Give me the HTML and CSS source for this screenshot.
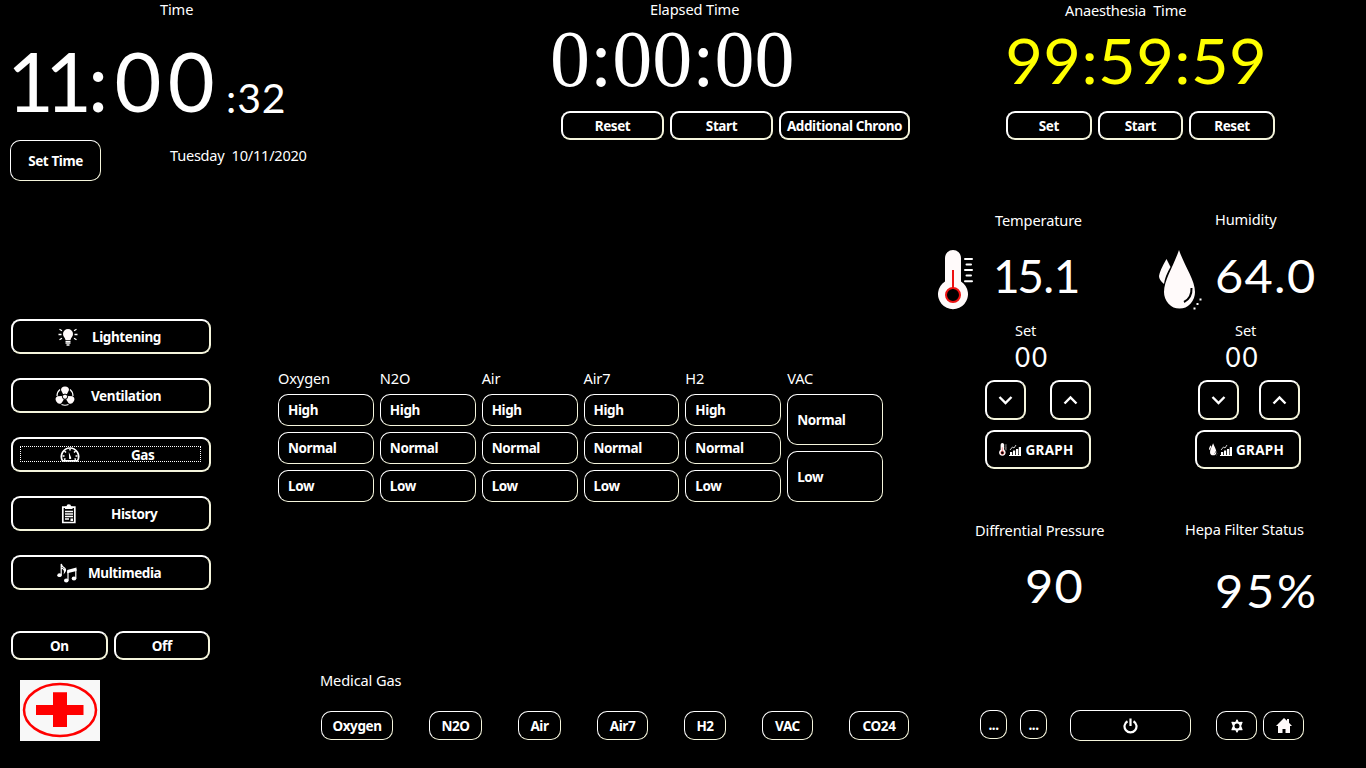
FILE: index.html
```
<!DOCTYPE html>
<html lang="en">
<head>
<meta charset="utf-8">
<title>Operating Room Control Panel</title>
<link rel="stylesheet" href="styles.css">
</head>
<body>
<svg class="defs" width="0" height="0">
  <symbol id="thermo" viewBox="0 0 36 60">
    <path d="M7 8a8 8 0 0 1 16 0v23.5a15 15 0 1 1-16 0z" fill="#fffafa"/>
    <path d="M15 20v20" stroke="#e11" stroke-width="2"/>
    <circle cx="15" cy="45" r="7" fill="#000" stroke="#e11" stroke-width="2"/>
    <path d="M27 9h7M28.500 14.500h4.500M27 20h7M28.500 25.500h4.500M27 31.200h7" stroke="#fff" stroke-width="2" stroke-linecap="round"/>
  </symbol>
  <symbol id="drops" viewBox="0 0 44 60">
    <path d="M7.500 9L11.500 17Q6 26 5 34 0 30 0 26 1 20 7.500 9z" fill="#fffafa"/>
    <path d="M20 0C25 15 36 30 36 42a15.500 16.500 0 0 1-31 0C5 30 15 15 20 0z" fill="#fffafa"/>
    <path d="M32.500 38Q33 48 25 52" fill="none" stroke="#000" stroke-width="2"/>
    <path d="M34.500 58.500h2M37.500 54h2M40.500 49.500h2" stroke="#fff" stroke-width="2"/>
  </symbol>
  <symbol id="bars" viewBox="0 0 12 12">
    <path d="M0 11.500h12" stroke="#fff"/>
    <path d="M1 8h2.200v3H1zM4 6.500h2.200V11H4zM7 5h2.200v6H7zM9.800 3H12v8H9.800z" fill="#fff"/>
    <path d="M1 6l2.500-3 1.500 1L7 1" fill="none" stroke="#fff" stroke-width=".8"/>
  </symbol>
  <symbol id="down" viewBox="0 0 16 10"><path d="M1.500 2l6 6 6-6" fill="none" stroke="#fff" stroke-width="2.400"/></symbol>
  <symbol id="up" viewBox="0 0 16 10"><path d="M1.500 8.500l6-6 6 6" fill="none" stroke="#fff" stroke-width="2.400"/></symbol>
</svg>

<header class="top">
  <section class="clock">
    <div class="label clock-label">Time</div>
    <div class="clock-time"><span class="ones">1</span><span class="ones last">1</span><span>:</span><span>00</span><span class="seconds">:32</span></div>
    <div class="clock-foot"><button class="btn thin set-time">Set Time</button><span class="label date">Tuesday &nbsp;10/11/2020</span></div>
  </section>
  <section class="elapsed">
    <div class="label elapsed-label">Elapsed Time</div>
    <div class="elapsed-time">0:00:00</div>
    <div class="buttons"><button class="btn">Reset</button><button class="btn">Start</button><button class="btn wide">Additional Chrono</button></div>
  </section>
  <section class="anaes">
    <div class="label anaes-label">Anaesthesia &nbsp;Time</div>
    <div class="anaes-time">99:59:59</div>
    <div class="buttons"><button class="btn">Set</button><button class="btn">Start</button><button class="btn">Reset</button></div>
  </section>
</header>

<main class="panel">
  <aside class="side">
    <nav class="nav">
      <button class="btn light"><svg width="20" height="18" viewBox="0 0 20 18"><path d="M10 1a5 5 0 0 1 5 5c0 2.500-2 3.500-2.500 6h-5C7 9.500 5 8.500 5 6a5 5 0 0 1 5-5z" fill="#fffafa"/><path d="M7.500 13.500h5M7.500 15.200h5M8.500 17h3M.5 6.500h3M16.500 6.500h3M1.500 1.200l2.500 1.500M18.500 1.200L16 2.700M1.500 11.800L4 10.300M18.500 11.800L16 10.300" stroke="#fff" stroke-width="1.300"/></svg><span>Lightening</span></button>
      <button class="btn vent"><svg width="20" height="20" viewBox="0 0 20 20"><g fill="#fffafa"><path d="M8 8L6 4Q6 .5 10 .5T14 4L12 8z"/><path d="M8 8L6 4Q6 .5 10 .5T14 4L12 8z" transform="rotate(120 10 10.500)"/><path d="M8 8L6 4Q6 .5 10 .5T14 4L12 8z" transform="rotate(240 10 10.500)"/></g><circle cx="10" cy="10.700" r="2.600" fill="#fffafa" stroke="#000"/><path d="M5 3.500Q2 6 2 10M15 3.500Q18 6 18 10M6.500 18.500Q10 20 13.500 18.500" fill="none" stroke="#fff" stroke-width="1.200"/></svg><span>Ventilation</span></button>
      <button class="btn gas"><span class="focus"><svg width="20" height="16" viewBox="0 0 20 16"><path d="M2.500 14.800A8.600 8.600 0 1 1 17.500 14.800z" fill="none" stroke="#fff" stroke-width="1.700"/><path d="M10 2.500v2M4.500 5l1.500 1.500M15.500 5L14 6.500M2.500 10h2M15.500 10h2M4 13.500l1.500-.8M16 13.500l-1.500-.8" stroke="#fff" stroke-width="1.500"/><path d="M8.800 6l2.300 5.500a1.100 1.100 0 1 1-2 0z" fill="#fff"/></svg><span class="gas-text">Gas</span></span></button>
      <button class="btn hist"><svg width="16" height="20" viewBox="0 0 16 20"><path d="M1.800 3.200h12v15.300h-12z" fill="none" stroke="#fff" stroke-width="1.700"/><path d="M4 5V2.500H5.500a2.300 2.300 0 0 1 4.600 0h1.500V5z" fill="#fff"/><path d="M4 7.500h8M4 10h8M4 12.500h8M4 15h4" stroke="#fff" stroke-width="1.400"/><path d="M9.500 14.500H12V17H9.500z" fill="#fff"/></svg><span>History</span></button>
      <button class="btn media"><svg width="20" height="20" viewBox="0 0 20 20"><g fill="#fff"><ellipse cx="2.500" cy="12.200" rx="2.200" ry="1.900"/><ellipse cx="9.300" cy="17.500" rx="2.300" ry="2"/><ellipse cx="17" cy="15.500" rx="2.300" ry="2"/><path d="M10.200 7L19.500 4.500V8L10.200 10.300z"/></g><path d="M4.200 12V1Q5 4 7.500 5 9.500 7 7.500 9.500 8 6 4.200 5M11 17.500V8M18.800 15.500V6" fill="none" stroke="#fff" stroke-width="1.200"/></svg><span>Multimedia</span></button>
    </nav>
    <div class="power-row"><button class="btn">On</button><button class="btn">Off</button></div>
    <svg class="logo" width="80" height="61" viewBox="0 0 80 61"><rect width="80" height="61" fill="#f8f8f8"/><ellipse cx="40" cy="30" rx="36" ry="26" fill="none" stroke="#f00" stroke-width="2.500"/><path d="M33 12.300h14V25h16.500v10H47v12H33V35H16V25h17z" fill="#f00"/></svg>
  </aside>

  <section class="center">
    <div class="matrix">
      <div class="gas-col"><div class="label">Oxygen</div><button class="btn thin">High</button><button class="btn thin">Normal</button><button class="btn thin">Low</button></div>
      <div class="gas-col"><div class="label">N2O</div><button class="btn thin">High</button><button class="btn thin">Normal</button><button class="btn thin">Low</button></div>
      <div class="gas-col"><div class="label">Air</div><button class="btn thin">High</button><button class="btn thin">Normal</button><button class="btn thin">Low</button></div>
      <div class="gas-col"><div class="label">Air7</div><button class="btn thin">High</button><button class="btn thin">Normal</button><button class="btn thin">Low</button></div>
      <div class="gas-col"><div class="label">H2</div><button class="btn thin">High</button><button class="btn thin">Normal</button><button class="btn thin">Low</button></div>
      <div class="gas-col"><div class="label">VAC</div><button class="btn thin">Normal</button><button class="btn thin">Low</button></div>
    </div>
    <div class="label med-label">Medical Gas</div>
    <div class="med-row"><button class="btn thin">Oxygen</button><button class="btn thin">N2O</button><button class="btn thin">Air</button><button class="btn thin">Air7</button><button class="btn thin">H2</button><button class="btn thin">VAC</button><button class="btn thin">CO24</button></div>
  </section>

  <section class="right">
    <div class="sensors">
      <div class="sensor temp">
        <div class="label name">Temperature</div>
        <div class="reading"><svg width="36" height="60"><use href="#thermo"/></svg><span class="value"><span class="one">1</span>5.1</span></div>
        <div class="label set">Set</div>
        <div class="target">00</div>
        <div class="arrows"><button class="btn"><svg width="16" height="10"><use href="#down"/></svg></button><button class="btn"><svg width="16" height="10"><use href="#up"/></svg></button></div>
        <button class="btn graph"><svg width="8" height="13"><use href="#thermo"/></svg><svg width="12" height="12"><use href="#bars"/></svg><span>GRAPH</span></button>
        <div class="label status">Diffrential Pressure</div>
        <div class="value status-value">90</div>
      </div>
      <div class="sensor hum">
        <div class="label name">Humidity</div>
        <div class="reading"><svg width="44" height="60"><use href="#drops"/></svg><span class="value">64.0</span></div>
        <div class="label set">Set</div>
        <div class="target">00</div>
        <div class="arrows"><button class="btn"><svg width="16" height="10"><use href="#down"/></svg></button><button class="btn"><svg width="16" height="10"><use href="#up"/></svg></button></div>
        <button class="btn graph"><svg width="9" height="13"><use href="#drops"/></svg><svg width="12" height="12"><use href="#bars"/></svg><span>GRAPH</span></button>
        <div class="label status">Hepa Filter Status</div>
        <div class="value status-value">95%</div>
      </div>
    </div>
    <div class="tools">
      <button class="btn thin dots">...</button><button class="btn thin dots">...</button>
      <button class="btn thin power"><svg width="16" height="16" viewBox="0 0 16 16"><path d="M4.500 3.200a6 6 0 1 0 6 0M7.500 .5V8" fill="none" stroke="#fff" stroke-width="2.200"/></svg></button>
      <button class="btn thin gear"><svg width="14" height="14" viewBox="0 0 14 14"><path d="M7 1l1.500 2.700 3.500-.4L10.500 7l1.500 3.700-3.500-.4L7 13l-1.500-2.700-3.500.4L3.500 7 2 3.300l3.500.4z" fill="#fff" stroke="#fff" stroke-width="1.200" stroke-linejoin="round"/><circle cx="7" cy="7" r="2.500"/></svg></button>
      <button class="btn thin home"><svg width="16" height="15" viewBox="0 0 16 15"><path d="M8 0l3 2.800V1h2v3.700L16 8h-2v7H9.500v-4h-3v4H2V8H0z" fill="#fffafa"/></svg></button>
    </div>
  </section>
</main>
</body>
</html>
```
FILE: styles.css
```
* { box-sizing: border-box; }
body { margin: 0; width: 1366px; height: 768px; overflow: hidden; background: #000; color: #fff; font-family: "Noto Sans", sans-serif; }
.defs { display: block; }
svg { display: block; flex: none; }
.label { font-size: 14.6px; line-height: 20px; height: 20px; letter-spacing: -0.13px; white-space: nowrap; }
.btn {
  display: flex; align-items: center; justify-content: center; flex: none;
  height: 29px; margin: 0; padding: 0; background: #000; color: #fff;
  border: 2px solid; border-color: #fff #f5f5dc #f5f5dc #fff; border-radius: 9px;
  font: 700 13.5px/18px "Noto Sans", sans-serif; letter-spacing: -0.4px; white-space: nowrap;
}
.btn.thin { border-width: 1px; border-radius: 10px; }
.buttons { display: flex; gap: 6px; }

.top { display: flex; height: 200px; }
.clock { width: 540px; }
.clock-label, .elapsed-label { height: 19px; line-height: 18px; }
.clock-label { margin-left: 160px; }
.clock-time { display: flex; align-items: baseline; height: 121px; padding: 12px 0 0 7px; font: 81px/100px Lato, sans-serif; letter-spacing: 6.3px; }
.ones { letter-spacing: -9px; }
.ones.last { letter-spacing: -4px; }
.seconds { position: relative; top: 1px; font-size: 41px; letter-spacing: 0.8px; margin-left: 5px; }
.clock-foot { display: flex; padding-left: 10px; }
.set-time { width: 91px; height: 41px; }
.date { margin: 5px 0 0 69px; letter-spacing: -0.25px; }
.elapsed { width: 460px; }
.elapsed-label { margin-left: 110px; }
.elapsed-time { height: 92px; padding-left: 10px; font: 80px/80px "Liberation Serif", serif; }
.elapsed .buttons { padding-left: 21px; }
.elapsed .btn { width: 103px; }
.elapsed .btn.wide { width: 131px; }
.anaes-label { margin-left: 65px; letter-spacing: -0.2px; }
.anaes-time { height: 91px; padding-left: 5px; color: #ff0; font: 62.5px/79px Lato, sans-serif; letter-spacing: 0.4px; transform: scaleX(1.04); transform-origin: 0 0; }
.anaes .buttons { padding-left: 6px; }
.anaes .btn { width: 85.6px; }

.panel { display: flex; height: 568px; }
.side { width: 270px; padding: 119px 0 0 11px; }
.nav { display: flex; flex-direction: column; gap: 24px; width: 200px; }
.nav .btn { height: 35px; justify-content: flex-start; }
.light svg { margin: 0 14px 0 45px; }
.vent svg { margin: 0 16px 0 42px; }
.hist svg { margin: 0 34px 0 48px; }
.media svg { margin: 0 11px 0 44px; }
.gas .focus { display: flex; align-items: center; width: 181px; height: 16px; margin: -1px 0 0 7px; border: 1px dotted #fff; }
.gas svg { margin: 0 51px 0 39px; }
.gas-text { padding-top: 2px; }
.power-row { display: flex; gap: 6px; margin-top: 41px; }
.power-row .btn { width: 96.5px; }
.logo { margin: 20px 0 0 9px; }

.center { width: 655px; padding-top: 168px; }
.matrix { display: grid; grid-template-columns: repeat(6, 1fr); gap: 6px; width: 605px; margin-left: 8px; }
.gas-col { display: flex; flex-direction: column; gap: 6px; height: 134px; }
.gas-col .btn { flex: 1; justify-content: flex-start; padding-left: 9px; }
.med-label { margin: 168px 0 0 50px; }
.med-row { display: flex; gap: 36px; padding: 21px 0 0 51px; }
.med-row .btn { width: 51px; }
.med-row .btn:nth-child(1) { width: 72px; }
.med-row .btn:nth-child(2) { width: 53px; }
.med-row .btn:nth-child(3) { width: 43px; }
.med-row .btn:nth-child(5) { width: 42px; }
.med-row .btn:nth-child(7) { width: 60px; }

.right { width: 441px; }
.sensors { display: flex; height: 510px; }
.sensor { width: 220px; }
.name { margin: 10px 0 0 70px; }
.hum .name { margin-top: 9px; }
.reading { display: flex; height: 70px; margin: 20px 0 0 13px; }
.hum .reading { margin: 21px 0 0 14px; }
.value { font: 46px/60px Lato, sans-serif; letter-spacing: 1.2px; margin: -4px 0 0 20px; transform: scaleX(1.06); transform-origin: 0 0; }
.temp .reading .value { letter-spacing: -0.5px; margin-left: 19px; transform: none; }
.temp .reading .one { letter-spacing: -2.5px; }
.hum .reading .value { margin-left: 12px; }
.set { margin: 0 0 0 90px; }
.target { margin: 2px 0 0 90px; height: 30px; font: 26px/31px Lato, sans-serif; letter-spacing: 1.9px; }
.hum .target { margin-left: 80.5px; }
.arrows { display: flex; gap: 24px; margin: 8px 0 10px 60px; }
.hum .arrows { gap: 20px; margin-left: 53px; }
.arrows .btn { width: 41px; height: 40px; border-radius: 9px; }
.graph { width: 106px; height: 39px; margin-left: 60px; gap: 2px; padding-right: 3px; }
.hum .graph { margin-left: 50px; }
.graph span { margin-left: 2px; letter-spacing: 0.3px; }
.status { margin: 51px 0 0 50px; }
.hum .status { margin: 50px 0 0 40px; }
.status-value { margin: 16px 0 0 100px; }
.hum .status-value { margin: 22px 0 0 70px; letter-spacing: 2.6px; }
.tools { display: flex; padding-left: 55px; }
.dots { width: 27px; margin-right: 13px; }
.power { width: 121px; height: 31px; margin-left: 10px; margin-right: 25px; }
.gear, .home { width: 41px; margin: 1px 6px 0 0; }
```
